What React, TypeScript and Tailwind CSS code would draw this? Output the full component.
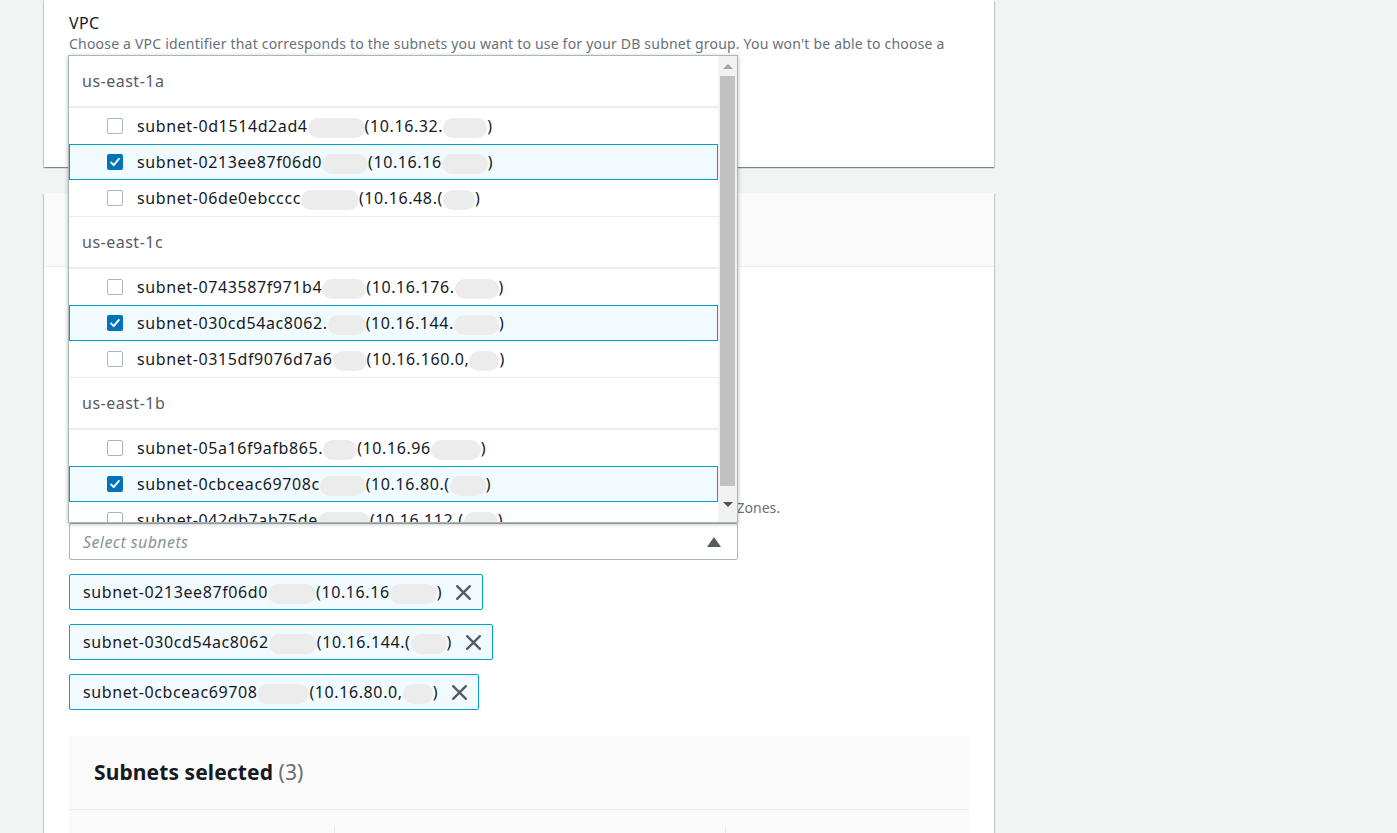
import React from 'react';

type Subnet = {
  id: string;
  b1: number;
  ip: string;
  b2: number;
  checked?: boolean;
};

const groups: { zone: string; items: Subnet[] }[] = [
  {
    zone: 'us-east-1a',
    items: [
      { id: 'subnet-0d1514d2ad4', b1: 57, ip: '(10.16.32.', b2: 44 },
      { id: 'subnet-0213ee87f06d0', b1: 46, ip: '(10.16.16', b2: 46, checked: true },
      { id: 'subnet-06de0ebcccc', b1: 58, ip: '(10.16.48.(', b2: 32 },
    ],
  },
  {
    zone: 'us-east-1c',
    items: [
      { id: 'subnet-0743587f971b4', b1: 44, ip: '(10.16.176.', b2: 44 },
      { id: 'subnet-030cd54ac8062.', b1: 38, ip: '(10.16.144.', b2: 45, checked: true },
      { id: 'subnet-0315df9076d7a6', b1: 34, ip: '(10.16.160.0,', b2: 30 },
    ],
  },
  {
    zone: 'us-east-1b',
    items: [
      { id: 'subnet-05a16f9afb865.', b1: 34, ip: '(10.16.96', b2: 50 },
      { id: 'subnet-0cbceac69708c', b1: 46, ip: '(10.16.80.(', b2: 36, checked: true },
      { id: 'subnet-042db7ab75de', b1: 52, ip: '(10.16.112.(', b2: 34 },
    ],
  },
];

const tokens: Subnet[] = [
  { id: 'subnet-0213ee87f06d0', b1: 48, ip: '(10.16.16', b2: 47 },
  { id: 'subnet-030cd54ac8062', b1: 48, ip: '(10.16.144.(', b2: 36 },
  { id: 'subnet-0cbceac69708', b1: 52, ip: '(10.16.80.0,', b2: 30 },
];

const Blob: React.FC<{ w: number }> = ({ w }) => (
  <span
    className="inline-block h-[20px] rounded-full bg-[#ececec] align-middle"
    style={{ width: w }}
  />
);

const SubnetLabel: React.FC<{ s: Subnet }> = ({ s }) => (
  <span className="whitespace-nowrap tracking-[0.6px]">
    {s.id}
    <Blob w={s.b1} />
    {s.ip}
    <Blob w={s.b2} />)
  </span>
);

const Checkbox: React.FC<{ checked?: boolean }> = ({ checked }) =>
  checked ? (
    <span className="flex h-4 w-4 shrink-0 items-center justify-center rounded-[2px] bg-[#0073bb]">
      <svg viewBox="0 0 16 16" className="h-3.5 w-3.5">
        <path d="M3.5 8.5l3 3 6-7" fill="none" stroke="#fff" strokeWidth="2.2" strokeLinecap="round" strokeLinejoin="round" />
      </svg>
    </span>
  ) : (
    <span className="block h-4 w-4 shrink-0 rounded-[2px] border border-[#aab7b8] bg-white" />
  );

const Dropdown: React.FC = () => (
  <div className="absolute bottom-full left-[-1px] flex h-[468px] w-[670px] border border-[#aab7b8] bg-white shadow-[0_1px_4px_rgba(0,28,36,0.3)]">
    <div className="flex-1 overflow-hidden">
      {groups.map((g, gi) => (
        <div key={g.zone} className={gi > 0 ? 'border-t border-[#eaeded]' : ''}>
          <div className="flex h-[52px] items-center border-b-2 border-[#eaeded] px-[13px] text-[16px] tracking-[0.5px] text-[#545b64]">
            {g.zone}
          </div>
          {g.items.map((s) => (
            <div
              key={s.id}
              className={`flex h-[36px] items-center gap-[14px] text-[16px] text-[#16191f] ${
                s.checked ? 'border border-[#00a1c9] bg-[#f1faff] pl-[37px]' : 'pl-[38px]'
              }`}
            >
              <Checkbox checked={s.checked} />
              <SubnetLabel s={s} />
            </div>
          ))}
        </div>
      ))}
    </div>
    <div className="flex w-[19px] flex-col bg-[#f1f1f1]">
      <div className="flex h-[20px] items-center justify-center">
        <span className="block h-0 w-0 border-x-[5px] border-b-[5px] border-x-transparent border-b-[#a3a3a3]" />
      </div>
      <div className="mx-[2px] h-[410px] bg-[#c1c1c1]" />
      <div className="flex flex-1 items-center justify-center">
        <span className="block h-0 w-0 border-x-[5px] border-t-[5px] border-x-transparent border-t-[#505050]" />
      </div>
    </div>
  </div>
);

const XIcon: React.FC = () => (
  <svg viewBox="0 0 16 16" className="h-[17px] w-[17px] shrink-0">
    <path d="M2 2l12 12M14 2L2 14" stroke="#545b64" strokeWidth="2.2" strokeLinecap="round" />
  </svg>
);

const cardShadow =
  'shadow-[0_1px_1px_0_rgba(0,28,36,0.3),1px_1px_1px_0_rgba(0,28,36,0.15),-1px_1px_1px_0_rgba(0,28,36,0.15)]';

export default function App() {
  return (
    <div
      className="h-[833px] w-full overflow-hidden bg-[#f2f3f3] pl-[44px]"
      style={{ fontFamily: '"Noto Sans", "Open Sans", Arial, sans-serif' }}
    >
      <div className="w-[950px]">
        <div className={`h-[167px] bg-white px-[25px] pt-[12px] ${cardShadow}`}>
          <div className="text-[16px] leading-[22px] tracking-[0.4px] text-[#16191f]">VPC</div>
          <div className="w-[890px] text-[14px] leading-[20px] tracking-[0.2px] text-[#687078]">
            Choose a VPC identifier that corresponds to the subnets you want to use for your DB subnet group. You won't be able to choose a different VPC after your DB subnet group has been created.
          </div>
        </div>

        <div className={`mt-[26px] bg-white ${cardShadow}`}>
          <div className="h-[74px] border-b border-[#eaeded] bg-[#fafafa]" />
          <div className="px-[25px] pb-10 pt-[14px]">
            <div className="h-[196px]" />
            <div className="h-[22px] text-[16px] leading-[22px] text-[#16191f]">Subnets</div>
            <div className="h-[18px] w-[711px] whitespace-nowrap text-right text-[14px] leading-[18px] text-[#687078]">
              Choose the subnets that you want to add. The list includes the subnets in the selected Availability Zones.
            </div>

            <div className="relative mt-[6px] w-[669px]">
              <Dropdown />
              <div className="flex h-[37px] items-center justify-between rounded-[2px] border border-[#aab7b8] bg-white pl-[13px] pr-[16px]">
                <span className="text-[16px] italic tracking-[0.4px] text-[#879596]">Select subnets</span>
                <span className="block h-0 w-0 border-x-[7px] border-b-[10px] border-x-transparent border-b-[#545b64]" />
              </div>
            </div>

            <div className="mt-[14px] flex flex-col items-start gap-[14px]">
              {tokens.map((t) => (
                <div
                  key={t.id}
                  className="flex h-[36px] items-center gap-[13px] rounded-[2px] border border-[#00a1c9] bg-[#f1faff] pl-[13px] pr-[10px] text-[16px] text-[#16191f]"
                >
                  <SubnetLabel s={t} />
                  <XIcon />
                </div>
              ))}
            </div>

            <div className="mt-[26px] w-[900px] bg-[#fafafa]">
              <div className="flex h-[74px] items-center border-b border-[#eaeded] px-[25px]">
                <span className="text-[21px] font-bold tracking-[0.1px] text-[#16191f]">
                  Subnets selected <span className="font-normal text-[#687078]">(3)</span>
                </span>
              </div>
              <div className="grid h-[60px] grid-cols-[266px_391px_1fr] pt-[16px]">
                <div className="border-r border-[#eaeded]" />
                <div className="border-r border-[#eaeded]" />
                <div />
              </div>
            </div>
          </div>
        </div>
      </div>
    </div>
  );
}
